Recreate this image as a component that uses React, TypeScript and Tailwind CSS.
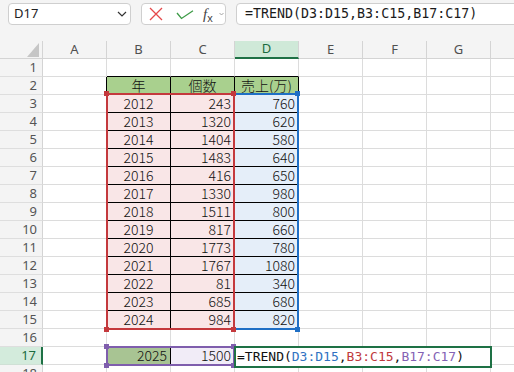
import React from 'react';

const data: [number, number, number][] = [
  [2012, 243, 760],
  [2013, 1320, 620],
  [2014, 1404, 580],
  [2015, 1483, 640],
  [2016, 416, 650],
  [2017, 1330, 980],
  [2018, 1511, 800],
  [2019, 817, 660],
  [2020, 1773, 780],
  [2021, 1767, 1080],
  [2022, 81, 340],
  [2023, 685, 680],
  [2024, 984, 820],
];

const cols = ['A', 'B', 'C', 'D', 'E', 'F', 'G', 'H'];
const rowNums = Array.from({ length: 18 }, (_, i) => i + 1);

function Formula({ colored }: { colored?: boolean }) {
  return (
    <span className="whitespace-nowrap">
      =TREND(
      <span className={colored ? 'text-[#2f72c2]' : ''}>D3:D15</span>,
      <span className={colored ? 'text-[#c0393d]' : ''}>B3:C15</span>,
      <span className={colored ? 'text-[#8462b4]' : ''}>B17:C17</span>)
    </span>
  );
}

function FormulaBar() {
  return (
    <div className="h-[41px] flex items-start pt-[3px] pl-[8px] gap-[10px]">
      {/* name box */}
      <div className="w-[123px] h-[22px] shrink-0 bg-white border border-[#cfcfcf] rounded-[4px] flex items-center justify-between pl-[5px] pr-[3px]">
        <span className="text-[13px] text-[#222]">D17</span>
        <svg width="10" height="6" viewBox="0 0 10 6">
          <path d="M1 1 L5 5 L9 1" fill="none" stroke="#333" strokeWidth="1.2" />
        </svg>
      </div>

      {/* cancel / enter / fx */}
      <div className="w-[85px] h-[22px] shrink-0 bg-white border border-[#cfcfcf] rounded-[4px] flex items-center pl-[7px]">
        <svg width="14" height="14" viewBox="0 0 14 14">
          <path d="M1 1 L13 13 M13 1 L1 13" stroke="#e5484a" strokeWidth="1.3" />
        </svg>
        <svg width="18" height="10" viewBox="0 0 18 10" className="ml-[13px] mt-[2px]">
          <path d="M1 3 L5.5 8.5 L17 0.8" fill="none" stroke="#3d9b47" strokeWidth="1.3" />
        </svg>
        <span className="ml-[9px] font-['Liberation_Serif',serif] italic text-[15px] text-[#444] leading-none">
          f<span className="text-[11px] not-italic font-['Liberation_Sans',sans-serif] relative top-[3px]">x</span>
        </span>
        <svg width="5" height="4" viewBox="0 0 5 4" className="ml-[6px]">
          <path d="M0.5 1 L2.5 3 L4.5 1" fill="none" stroke="#9a9a9a" strokeWidth="0.9" />
        </svg>
      </div>

      {/* formula input */}
      <div className="w-[300px] h-[22px] shrink-0 bg-white border border-[#cfcfcf] rounded-[4px] flex items-center pl-[8px] font-['DejaVu_Sans_Mono',monospace] text-[13.3px] text-[#1a1a1a]">
        <Formula />
      </div>
    </div>
  );
}

function cellInfo(r: number, c: number) {
  const inTable = r >= 2 && r <= 15 && c >= 1 && c <= 3;
  const rBlack = inTable || (c === 0 && r >= 2 && r <= 15) || (r === 17 && c === 1);
  const bBlack = inTable || (r === 1 && c >= 1 && c <= 3);

  let bg = 'bg-white';
  if (r === 2 && inTable) bg = 'bg-[#a9d08e]';
  else if (r >= 3 && r <= 15 && (c === 1 || c === 2)) bg = 'bg-[#f9e6e7]';
  else if (r >= 3 && r <= 15 && c === 3) bg = 'bg-[#e5eef9]';
  else if (r === 17 && c === 1) bg = 'bg-[#a8c493]';
  else if (r === 17 && c === 2) bg = 'bg-[#f1ecf7]';

  let text: string | null = null;
  let align = 'justify-end pr-[3px]';
  if (r === 2 && inTable) {
    text = ['年', '個数', '売上(万)'][c - 1];
    align = 'justify-center';
  } else if (r >= 3 && r <= 15 && c >= 1 && c <= 3) {
    const row = data[r - 3];
    text = String(row[c - 1]);
    if (c === 1) align = 'justify-center';
  } else if (r === 17 && c === 1) {
    text = '2025';
  } else if (r === 17 && c === 2) {
    text = '1500';
  }

  const border = `${rBlack ? 'border-r-black' : 'border-r-[#dcdcdc]'} ${bBlack ? 'border-b-black' : 'border-b-[#dcdcdc]'}`;
  return { cls: `${bg} ${border} ${align}`, text };
}

// formula reference range: coloured frame with a square handle on each corner
function RefRange({ frame, handle, right = true }: { frame: string; handle: string; right?: boolean }) {
  return (
    <div className={`absolute border-2 ${frame}`}>
      <div className={`absolute -left-[4px] -top-[4px] w-[5px] h-[5px] ${handle}`} />
      <div className={`absolute -left-[4px] -bottom-[4px] w-[5px] h-[5px] ${handle}`} />
      {right && <div className={`absolute -right-[3px] -top-[4px] w-[5px] h-[5px] ${handle}`} />}
      {right && <div className={`absolute -right-[3px] -bottom-[4px] w-[5px] h-[5px] ${handle}`} />}
    </div>
  );
}

function Sheet() {
  return (
    <div className="relative grid grid-cols-[43px_repeat(8,64px)] auto-rows-[18px] font-['Noto_Sans',sans-serif]">
      {/* corner */}
      <div className="flex items-end justify-end pr-[3px] pb-[1px] border-r border-b border-r-[#d4d4d4] border-b-[#d4d4d4]">
        <svg width="12" height="14" viewBox="0 0 12 14">
          <polygon points="12,0 12,14 0,14" fill="#c6c6c6" />
        </svg>
      </div>
      {cols.map((c) => (
        <div
          key={c}
          className={`flex items-center justify-center text-[13px] border-r border-r-[#d4d4d4] ${
            c === 'D'
              ? 'bg-[#cfe9d8] border-b-2 border-b-[#1e7145] text-[#1b6b3f]'
              : 'border-b border-b-[#d4d4d4] text-[#505050]'
          }`}
        >
          {c}
        </div>
      ))}

      {rowNums.map((r) => (
        <React.Fragment key={r}>
          <div
            className={`flex items-center justify-end pr-[5px] text-[13px] border-b ${
              r === 17
                ? 'bg-[#d3ebdc] text-[#1b6b3f] border-r-2 border-r-[#1e7145] border-b-[#cfe0d5]'
                : 'bg-[#f4f4f4] text-[#555] border-r border-r-[#d4d4d4] border-b-[#dedede]'
            }`}
          >
            {r}
          </div>
          {cols.map((_, c) => {
            const info = cellInfo(r, c);
            return (
              <div
                key={c}
                className={`flex items-center border-r border-b font-['Noto_Sans_CJK_JP',sans-serif] font-light text-[14px] leading-[17px] text-[#111] ${info.cls}`}
              >
                {info.text}
              </div>
            );
          })}
        </React.Fragment>
      ))}

      {/* ranges referenced by the formula being edited */}
      <div className="absolute left-[233px] top-[52px] w-[66px] h-[237px] border-2 border-[#1f6fc5]">
        <div className="absolute -right-[3px] -top-[4px] w-[5px] h-[5px] bg-[#1f6fc5]" />
        <div className="absolute -right-[3px] -bottom-[4px] w-[5px] h-[5px] bg-[#1f6fc5]" />
      </div>
      <RefRange frame="left-[106px] top-[52px] w-[129px] h-[237px] border-[#c4393d]" handle="bg-[#c4393d]" />
      <RefRange frame="left-[106px] top-[305px] w-[129px] h-[20px] border-[#7f5ead]" handle="bg-[#7f5ead]" />

      {/* active cell in edit mode */}
      <div className="absolute left-[234px] top-[305px] w-[258px] h-[22px] border-2 border-[#1e7145] bg-white flex items-center pl-[1px] font-['DejaVu_Sans_Mono',monospace] text-[13px] text-[#111]">
        <Formula colored />
      </div>
    </div>
  );
}

export default function App() {
  return (
    <div className="w-[514px] h-[372px] overflow-hidden bg-[#f4f4f4] font-['Noto_Sans',sans-serif]">
      <FormulaBar />
      <Sheet />
    </div>
  );
}
